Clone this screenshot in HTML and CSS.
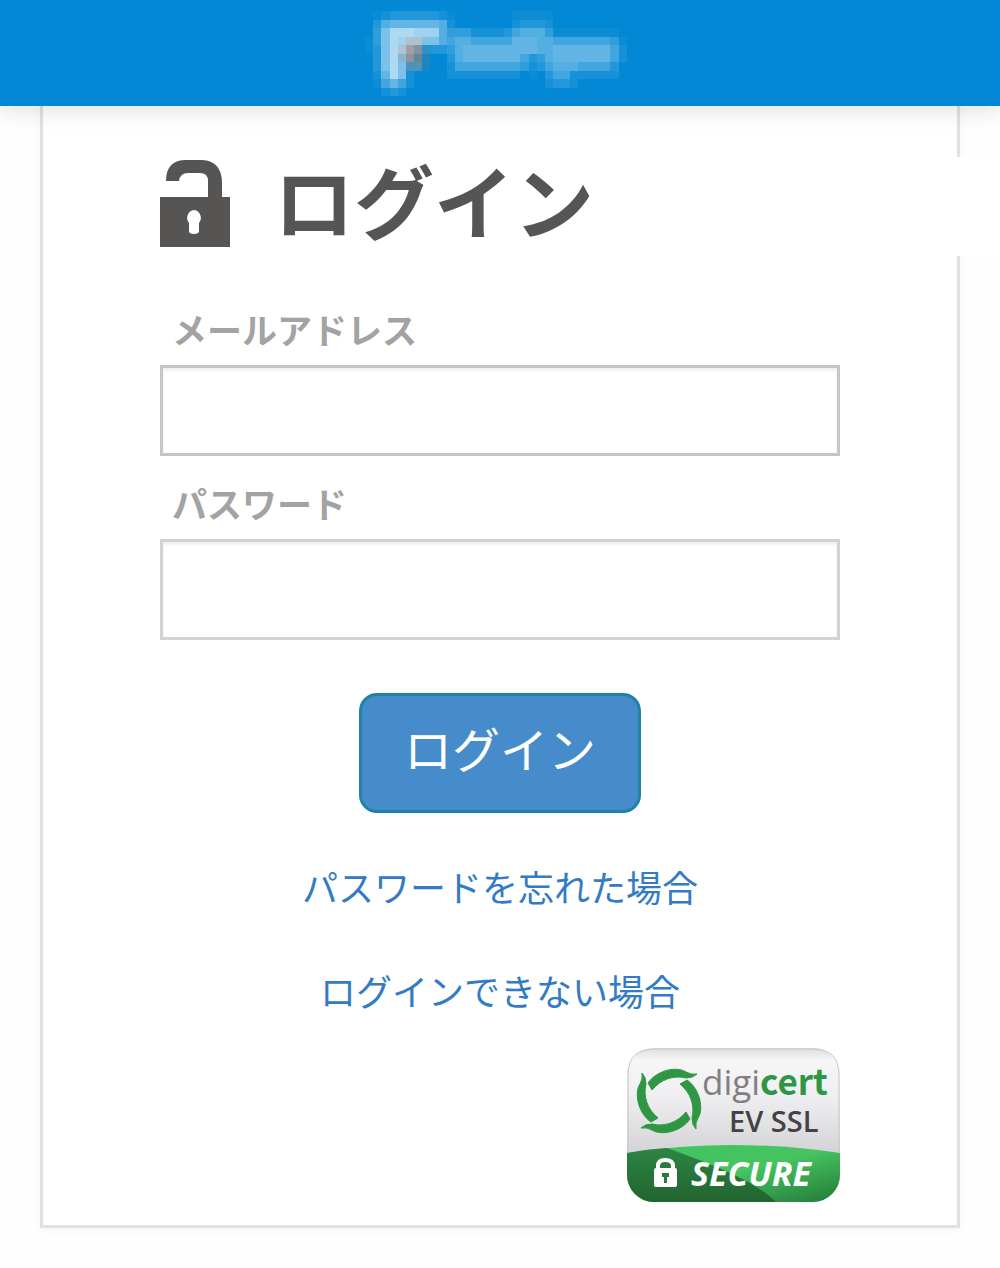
FILE: index.html
```
<!DOCTYPE html>
<html lang="ja">

<head>
    <meta charset="UTF-8">
    <meta name="viewport" content="width=device-width, initial-scale=1.0">
    <title>ログイン</title>
    <link rel="stylesheet" href="styles.css">
</head>

<body>
    <header class="site-header">
        <svg class="logo" viewBox="0 0 33 10" preserveAspectRatio="none" aria-hidden="true">
            <g stroke="#fff" fill="none" shape-rendering="crispEdges">
                <path stroke-opacity=".04" d="M1 .5h1M10 .5h1M18 .5h5M23 2.5h8M31 3.5h1M20 7.5h1M1 8.5h1M0 3.5h1M0 4.5h1" />
                <path stroke-opacity=".08" d="M2 .5h1M9 .5h1M10 1.5h1M18 1.5h1M22 1.5h1M13 2.5h4M31 4.5h1M31 5.5h1M10 6.5h1M20 6.5h1M1 7.5h1M5 7.5h1M10 7.5h9M25 7.5h6M5 8.5h1M22 8.5h1M25 8.5h1M2 9.5h1M4 9.5h1" />
                <path stroke-opacity=".13" d="M3 .5h6M1 1.5h1M19 1.5h3M17 2.5h1M1 4.5h1M8 4.5h2M1 5.5h1M10 5.5h1M20 5.5h1M1 6.5h1M21 6.5h1M30 6.5h1M22 7.5h1M23 8.5h2M3 9.5h1" />
                <path stroke-opacity=".19" d="M1 2.5h1M10 2.5h3M22 2.5h1M1 3.5h1M30 3.5h1M10 4.5h1M21 5.5h1M19 6.5h1" />
                <path stroke-opacity=".25" d="M18 2.5h1M10 3.5h1M13 3.5h5M23 3.5h7M30 4.5h1M19 5.5h1M30 5.5h1M11 6.5h8M22 6.5h1M26 6.5h4M23 7.5h2M2 8.5h1M4 8.5h1" />
                <path stroke-opacity=".32" d="M2 1.5h1M9 1.5h1M9 2.5h1M19 2.5h3M9 3.5h1M11 3.5h2M21 3.5h2M11 4.5h1M21 4.5h2M11 5.5h1M22 5.5h1M23 6.5h3" />
                <path stroke-opacity=".38" d="M3 1.5h6M18 3.5h3M12 4.5h9M23 4.5h7M12 5.5h7M23 5.5h7M2 7.5h1M3 8.5h1" />
                <path stroke-opacity=".48" d="M2 2.5h1M2 3.5h1M7 3.5h2M2 4.5h1M2 5.5h1M2 6.5h1M4 6.5h1M4 7.5h1" />
                <path stroke-opacity=".62" d="M6 2.5h3M4 3.5h1" />
                <path stroke-opacity=".68" d="M3 2.5h3M3 3.5h1M3 4.5h1M3 5.5h1M3 6.5h1M3 7.5h1" />
                <path stroke="#adc3cf" d="M5 3.5h2M4 4.5h1" />
                <path stroke="#86b5d2" d="M4 5.5h1" />
                <path stroke="#a19fa5" d="M5 4.5h1" />
                <path stroke="#8d93a0" d="M5 5.5h1" />
                <path stroke="#7e96a3" d="M6 4.5h1" />
                <path stroke="#638697" d="M6 5.5h1" />
                <path stroke="#4f92ba" d="M5 6.5h2" />
                <path stroke="#2e90c6" d="M7 4.5h1" />
                <path stroke="#1c86c0" d="M7 5.5h1M7 6.5h1" />
            </g>
        </svg>
    </header>

    <main class="panel">
        <h1 class="title">
            <svg class="title-icon" viewBox="0 0 70 92" aria-hidden="true">
                <path fill="#575553" fill-rule="evenodd" d="M0 40H48V24Q48 16 40 16H28Q20 16 19 24H6Q6 3 26 3H42Q62 4 62 26V40H70V90H0ZM34 53A8 8 0 0 0 29 66V74Q29 77 34 77Q39 77 39 74V66A8 8 0 0 0 34 53Z" />
            </svg>
            <span>ログイン</span>
        </h1>

        <form class="login-form">
            <label for="email">メールアドレス</label>
            <input type="email" id="email" class="email">
            <label for="password">パスワード</label>
            <input type="password" id="password" class="password">
            <button type="submit">ログイン</button>
        </form>

        <div class="links">
            <a href="#">パスワードを忘れた場合</a>
            <a href="#">ログインできない場合</a>
        </div>

        <svg class="badge" viewBox="0 0 213 154" role="img" aria-label="digicert EV SSL SECURE">
            <defs>
                <linearGradient id="silver" x1="0" y1="0" x2="0" y2="1">
                    <stop offset="0" stop-color="#dedee0" />
                    <stop offset=".08" stop-color="#f6f6f7" />
                    <stop offset=".3" stop-color="#f0f0f2" />
                    <stop offset=".7" stop-color="#d2d2d6" />
                </linearGradient>
                <linearGradient id="light" x1="0" y1="0" x2="1" y2="1">
                    <stop offset="0" stop-color="#43c45f" />
                    <stop offset=".5" stop-color="#45c461" />
                    <stop offset="1" stop-color="#237a38" />
                </linearGradient>
                <linearGradient id="dark" x1="0" y1="0" x2="0" y2="1">
                    <stop offset="0" stop-color="#2d8543" />
                    <stop offset="1" stop-color="#22642f" />
                </linearGradient>
                <clipPath id="shape">
                    <rect width="213" height="154" rx="27" />
                </clipPath>
                <path id="blade" d="M-17 -11L-21 -18C-12 -31 8 -35 17 -29Q22 -26 28 -27Q24 -23 17 -23C5 -26 -8 -22 -17 -11Z" />
            </defs>
            <g clip-path="url(#shape)">
                <rect width="213" height="154" fill="url(#silver)" />
                <path fill="url(#light)" d="M0 105Q106 89 213 105V154H0Z" />
                <path fill="url(#dark)" d="M0 105Q20 101 40 100C75 113 125 130 149 154H0Z" />
            </g>
            <path fill="none" stroke="#c6c6c9" stroke-width="1" d="M1 105V27Q1 1 27 1H186Q212 1 212 27V105" />
            <g fill="#2f9744" stroke="#2f9744" stroke-width="1" transform="translate(42 53)">
                <use href="#blade" />
                <use href="#blade" transform="rotate(90)" />
                <use href="#blade" transform="rotate(180)" />
                <use href="#blade" transform="rotate(270)" />
            </g>
            <text class="badge-brand" x="75" y="47">digi<tspan class="badge-cert">cert</tspan></text>
            <text class="badge-type" x="102" y="84">EV SSL</text>
            <path fill="none" stroke="#fff" stroke-width="4" d="M31 121V118Q31 112 38 112Q46 112 46 118V121" />
            <rect x="27" y="120" width="23" height="19" rx="2" fill="#fff" />
            <path fill="#2a7a3d" d="M35 125H42V129H40V135H37V129H35Z" />
            <text class="badge-secure" x="64" y="138">SECURE</text>
        </svg>
    </main>
</body>

</html>
```
FILE: styles.css
```
* {
    margin: 0;
    padding: 0;
    box-sizing: border-box;
    font-family: 'Noto Sans CJK JP', sans-serif;
}

body {
    background-color: #fefefe;
    color: #575553;
}

.site-header {
    position: relative;
    display: flex;
    justify-content: center;
    padding: 11px 0 10px;
    background-color: #0288d4;
    box-shadow: 0 2px 24px rgba(0, 0, 0, 0.14);
}

.logo {
    width: 270px;
    height: 85px;
}

.panel {
    display: flex;
    flex-direction: column;
    margin: 0 40px 40px;
    padding: 51px 117px 23px;
    background-color: #fff;
    border: 3px solid #e1e1e1;
    border-top: none;
    box-shadow: 0 2px 8px rgba(0, 0, 0, 0.04);
}

/* runs past the right edge of the panel */
.title {
    display: flex;
    gap: 44px;
    height: 99px;
    margin-right: -160px;
    margin-bottom: 48px;
    background-color: #fff;
    font-size: 80px;
    line-height: 82px;
}

.title-icon {
    width: 70px;
    height: 92px;
}

.login-form {
    display: flex;
    flex-direction: column;
}

label {
    padding-left: 12px;
    margin-bottom: 11px;
    color: #a3a3a3;
    font-size: 35px;
    font-weight: bold;
    line-height: 50px;
}

input {
    width: 100%;
    padding: 0 16px;
    background-color: #fff;
    border: 3px solid #c6c6c6;
    box-shadow: inset 0 3px 3px rgba(0, 0, 0, 0.06);
    font-size: 35px;
}

.email {
    height: 91px;
    margin-bottom: 22px;
}

.password {
    height: 101px;
    border-color: #d2d2d2;
}

button {
    align-self: center;
    margin-top: 53px;
    padding: 16px 42px 28px;
    background-color: #468ccb;
    border: 3px solid #1f82a6;
    border-radius: 18px;
    color: #fff;
    font-size: 48px;
    line-height: 70px;
    cursor: pointer;
}

.links {
    display: flex;
    flex-direction: column;
    align-items: center;
    gap: 52px;
    margin-top: 47px;
}

.links a {
    color: #337bc4;
    font-size: 36px;
    line-height: 52px;
    text-decoration: none;
}

.links a:hover {
    text-decoration: underline;
}

.badge {
    align-self: flex-end;
    width: 213px;
    height: 154px;
    margin-top: 32px;
}

.badge text {
    font-family: 'Open Sans', sans-serif;
}

.badge-brand {
    fill: #808084;
    font-size: 35px;
    font-weight: 500;
}

.badge-cert {
    fill: #2f9744;
    font-weight: bold;
}

.badge-type {
    fill: #434246;
    font-size: 29px;
    font-weight: 600;
}

.badge-secure {
    fill: #fff;
    font-size: 34px;
    font-style: italic;
    font-weight: bold;
}
```
